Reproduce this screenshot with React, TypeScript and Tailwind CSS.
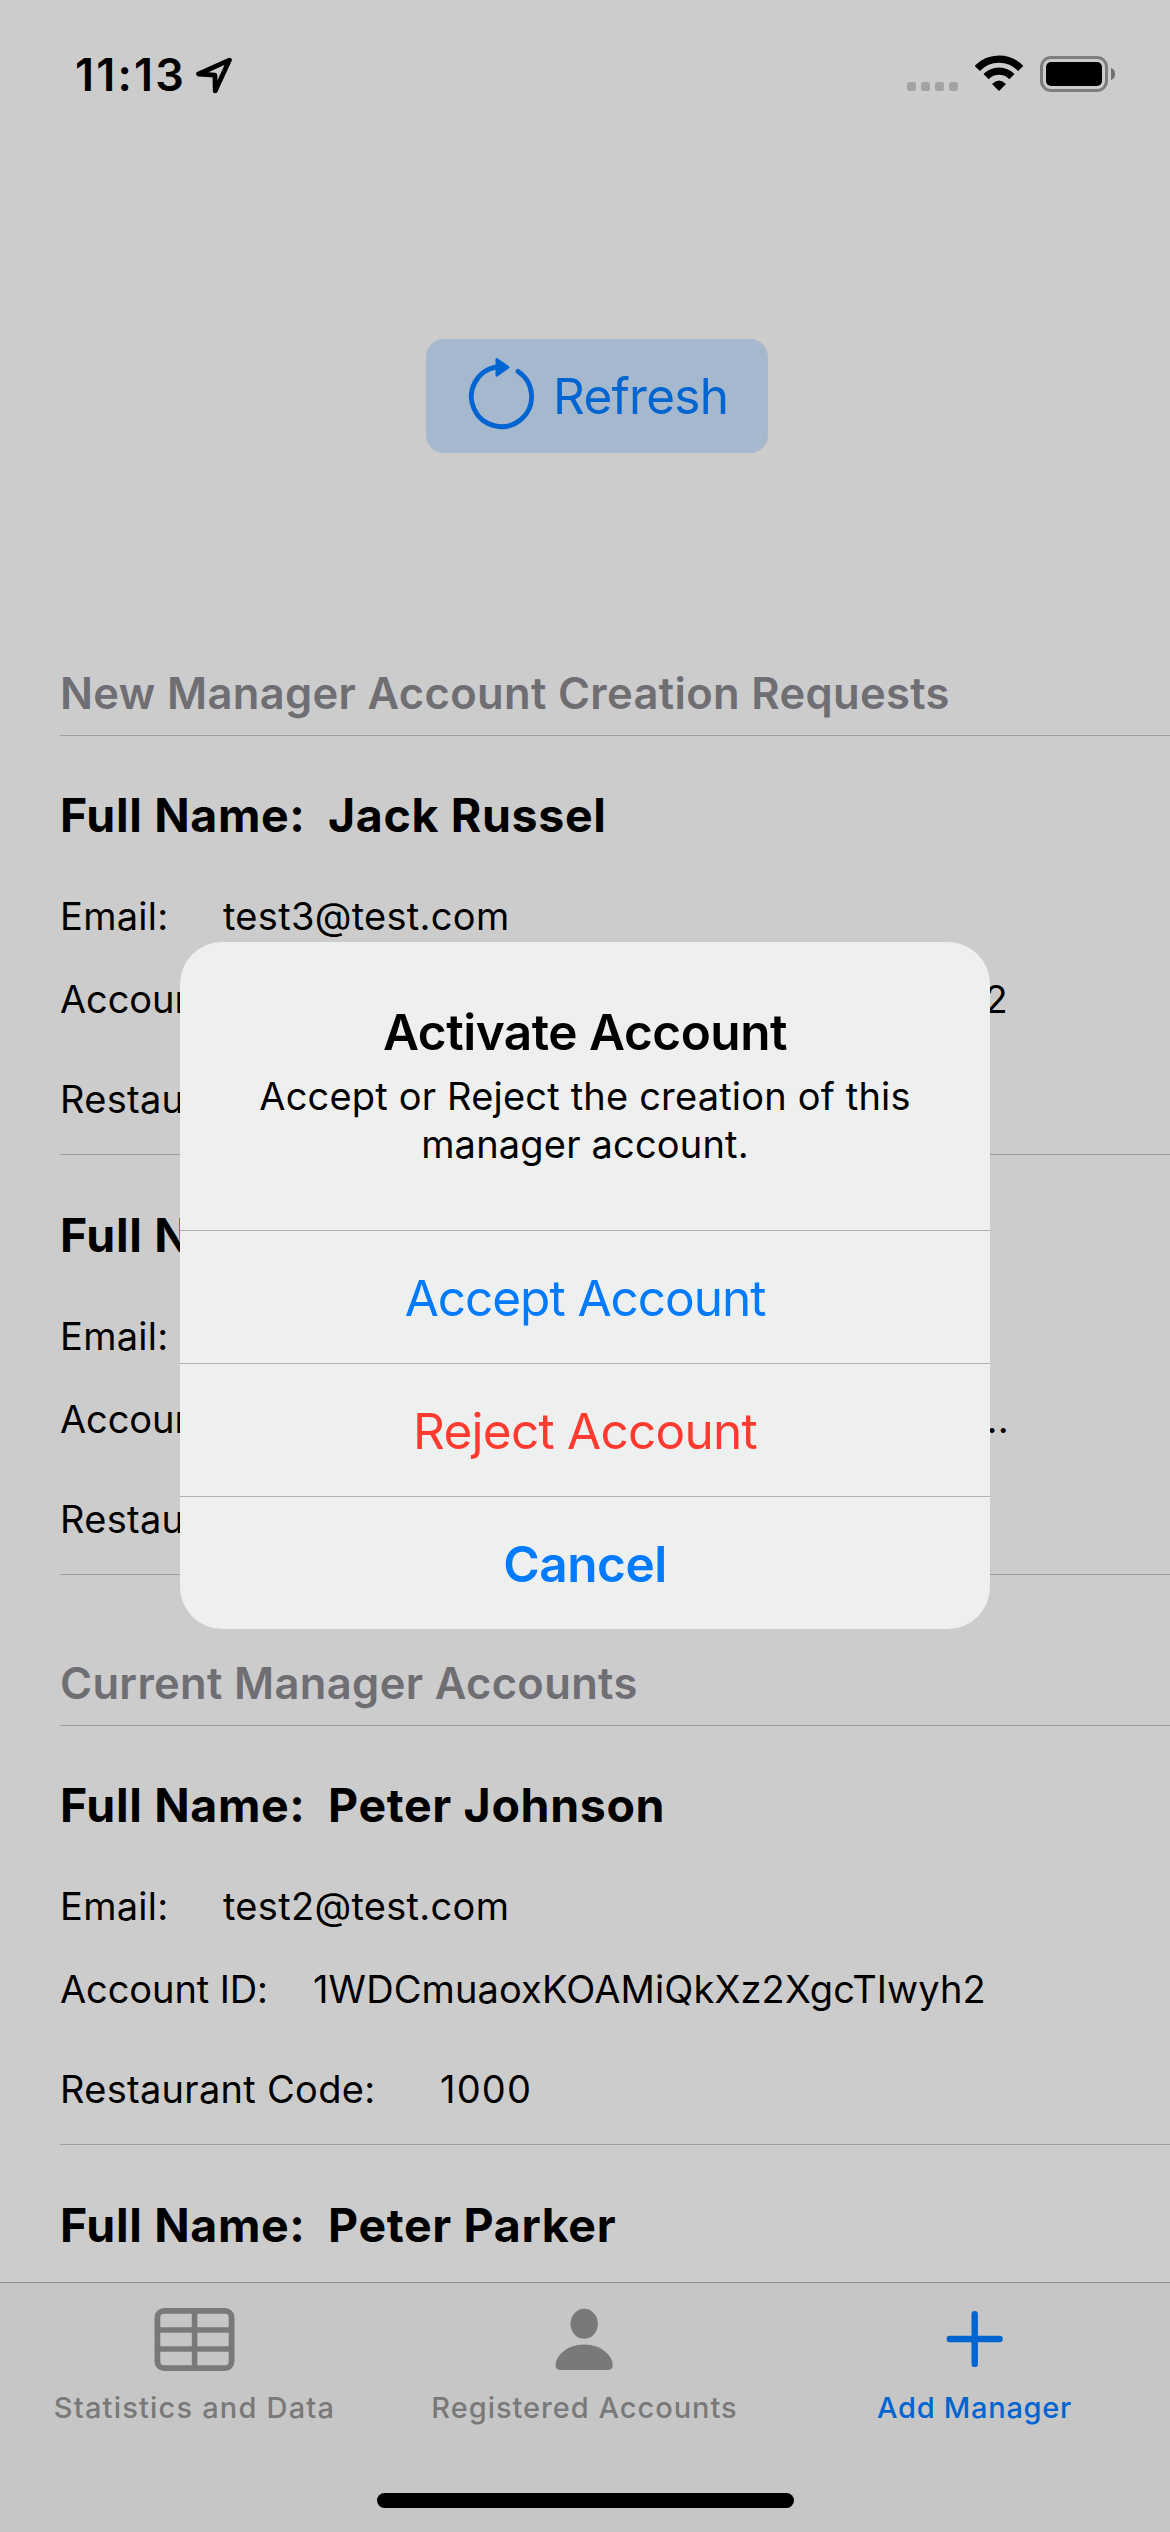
import type { ReactNode } from "react";

function StatusBar() {
  return (
    <div className="flex h-[149px] shrink-0 items-center justify-between pl-[75px] pr-[54px]">
      <div className="flex items-center">
        <span className="w-[119px] text-[45px] leading-[54px] font-semibold tracking-[2.2px]">
          11:13
        </span>
        <svg className="h-10 w-10" viewBox="194 54.5 40 40" fill="none">
          <path
            d="M229.4 59.6 198.6 73.5 214.9 74.6 215.2 90.4Z"
            stroke="#000"
            strokeWidth="4.8"
            strokeLinejoin="round"
          />
        </svg>
      </div>
      <div className="flex items-center">
        <svg className="h-[39px] w-[68px]" viewBox="907 55 68 39" fill="#a3a3a3">
          <rect x="907" y="82" width="9" height="9" rx="2.5" />
          <rect x="921" y="82" width="9" height="9" rx="2.5" />
          <rect x="935" y="82" width="9" height="9" rx="2.5" />
          <rect x="949" y="82" width="9" height="9" rx="2.5" />
        </svg>
        <svg className="h-[39px] w-[65px]" viewBox="975 55 65 39" fill="none">
          <path d="M977.3 68.4A30 30 0 0 1 1020.7 68.4" stroke="#000" strokeWidth="7.3" />
          <path d="M986.1 76.6A18 18 0 0 1 1011.9 76.6" stroke="#000" strokeWidth="7.3" />
          <path d="M999 91 992 84Q999 77 1006 84Z" fill="#000" />
        </svg>
        <svg className="h-[39px] w-[76px]" viewBox="1040 55 76 39" fill="none">
          <rect x="1041.5" y="57.5" width="65" height="33" rx="9.5" stroke="#7d7d7d" strokeWidth="3" />
          <rect x="1046" y="62" width="56" height="24" rx="5" fill="#000" />
          <path d="M1111 68C1116.5 69.5 1116.5 78.5 1111 80Z" fill="#707070" />
        </svg>
      </div>
    </div>
  );
}

function RefreshButton() {
  return (
    <div className="mt-[190px] flex shrink-0 justify-center pl-6">
      <button className="flex h-[114px] w-[342px] items-center gap-[15px] rounded-[18px] bg-[#a6b8ce] pl-10 text-[#0064d1]">
        <svg className="h-[78px] w-[72px] shrink-0" viewBox="466 357 72 78" fill="none">
          <path
            d="M518 371.4A30.1 30.1 0 1 1 497 366.8"
            stroke="currentColor"
            strokeWidth="4.8"
            strokeLinecap="round"
          />
          <path
            d="M496.7 359.2 508.3 367.3 496.7 375.4Z"
            fill="currentColor"
            stroke="currentColor"
            strokeWidth="2.4"
            strokeLinejoin="round"
          />
        </svg>
        <span className="text-[49.5px] leading-[60px] tracking-[-0.74px]">Refresh</span>
      </button>
    </div>
  );
}

function SectionHeader({ title, className }: { title: string; className: string }) {
  return (
    <div className={`ml-[60px] flex shrink-0 items-end border-b border-[#9d9e9e] pb-4 ${className}`}>
      <h2 className="text-[43.5px] leading-[52px] font-semibold tracking-[0.34px] text-[#6e6e73]">
        {title}
      </h2>
    </div>
  );
}

function FullName({ name }: { name: string }) {
  return (
    <div className="flex text-[46.5px] leading-[56px] font-bold tracking-[0.65px] whitespace-nowrap">
      <span className="w-[268px]">Full Name:</span>
      <span>{name}</span>
    </div>
  );
}

type Account = {
  name: string;
  email: string;
  id: ReactNode;
  code: string;
};

function AccountItem({ account, className }: { account: Account; className: string }) {
  return (
    <div
      className={`ml-[60px] flex shrink-0 flex-col justify-end border-b border-[#9d9e9e] pb-8 text-[38px] leading-[46px] tracking-[0.3px] whitespace-nowrap ${className}`}
    >
      <FullName name={account.name} />
      <div className="mt-[50px] flex">
        <span className="w-[163px]">Email:</span>
        <span>{account.email}</span>
      </div>
      <div className="mt-[37px] flex">
        <span className="w-[253px] tracking-[-0.1px]">Account ID:</span>
        {account.id}
      </div>
      <div className="mt-[54px] flex">
        <span className="w-[380px]">Restaurant Code:</span>
        <span className="tracking-[1.2px]">{account.code}</span>
      </div>
    </div>
  );
}

function TabItem({ label, className, children }: { label: string; className: string; children: ReactNode }) {
  return (
    <div className={`flex w-[390px] flex-col items-center pr-[1px] ${className}`}>
      {children}
      <span className="mt-[10px] text-[29px] leading-9 font-medium">{label}</span>
    </div>
  );
}

function TabBar() {
  return (
    <div className="flex h-[250px] shrink-0 flex-col items-center border-t border-[#919191] bg-[#c6c6c6] pt-[17px]">
      <div className="flex">
        <TabItem label="Statistics and Data" className="tracking-[1.19px] text-[#797979]">
          <svg className="h-20 w-[88px]" viewBox="150.5 2300 88 80" fill="none" stroke="currentColor" strokeWidth="5.8">
            <rect x="156.9" y="2310.9" width="74.2" height="57.2" rx="6.6" />
            <path d="M157 2330H231M157 2349H231M194.1 2311V2368" strokeWidth="5.6" />
          </svg>
        </TabItem>
        <TabItem label="Registered Accounts" className="tracking-[0.98px] text-[#797979]">
          <svg className="h-20 w-[88px]" viewBox="540.5 2300 88 80" fill="currentColor">
            <ellipse cx="583.7" cy="2323.8" rx="13.7" ry="15" />
            <path d="M560 2370C556.8 2370 555 2368.3 555 2365.2C555 2356.5 565.5 2344.4 583.7 2344.4C601.8 2344.4 612.3 2356.5 612.3 2365.2C612.3 2368.3 610.5 2370 607.3 2370Z" />
          </svg>
        </TabItem>
        <TabItem label="Add Manager" className="tracking-[0.72px] text-[#0064d1]">
          <svg className="h-20 w-[88px]" viewBox="930.5 2300 88 80" fill="none">
            <path
              d="M949.3 2339H999.1M974.2 2314.1V2363.9"
              stroke="currentColor"
              strokeWidth="6.4"
              strokeLinecap="round"
            />
          </svg>
        </TabItem>
      </div>
      <div className="mt-[67px] h-[15px] w-[417px] rounded-full bg-black" />
    </div>
  );
}

function AlertDialog() {
  return (
    <div
      role="alertdialog"
      className="absolute top-[942px] left-[180px] flex h-[687px] w-[810px] flex-col overflow-hidden rounded-[42px] bg-[#eeefef] text-center"
    >
      <div className="h-[288px] shrink-0 pt-[60px]">
        <h1 className="text-[49.5px] leading-[60px] font-semibold tracking-[-0.47px]">Activate Account</h1>
        <p className="mt-[10px] text-[38px] leading-[48px] tracking-[0.19px]">
          Accept or Reject the creation of this
          <br />
          manager account.
        </p>
      </div>
      <button className="h-[133px] border-t border-[#b0b1b1] pt-[2px] text-[49.5px] leading-[60px] tracking-[-1.03px] text-[#007aff]">
        Accept Account
      </button>
      <button className="h-[133px] border-t border-[#b0b1b1] pt-[2px] text-[49.5px] leading-[60px] tracking-[-0.74px] text-[#ff3b30]">
        Reject Account
      </button>
      <button className="h-[133px] border-t border-[#b0b1b1] pt-[2px] text-[49.5px] leading-[60px] font-semibold tracking-[-0.46px] text-[#007aff]">
        Cancel
      </button>
    </div>
  );
}

export default function App() {
  return (
    <div className="relative flex h-[2532px] w-[1170px] flex-col overflow-hidden bg-[#cccccc] font-['Inter',sans-serif] text-black">
      <div className="flex min-h-0 flex-1 flex-col overflow-hidden">
        <StatusBar />
        <RefreshButton />
        <SectionHeader title="New Manager Account Creation Requests" className="h-[283px]" />
        <AccountItem
          className="h-[419px]"
          account={{
            name: "Jack Russel",
            email: "test3@test.com",
            id: <span className="w-[695px] text-right">2</span>,
            code: "",
          }}
        />
        <AccountItem
          className="h-[420px]"
          account={{
            name: "",
            email: "",
            id: <span className="w-[696px] text-right">...</span>,
            code: "",
          }}
        />
        <SectionHeader title="Current Manager Accounts" className="h-[151px]" />
        <AccountItem
          className="h-[419px]"
          account={{
            name: "Peter Johnson",
            email: "test2@test.com",
            id: <span className="tracking-[0.12px]">1WDCmuaoxKOAMiQkXz2XgcTIwyh2</span>,
            code: "1000",
          }}
        />
        <div className="ml-[60px] shrink-0 pt-[52px]">
          <FullName name="Peter Parker" />
        </div>
      </div>
      <TabBar />
      <AlertDialog />
    </div>
  );
}
